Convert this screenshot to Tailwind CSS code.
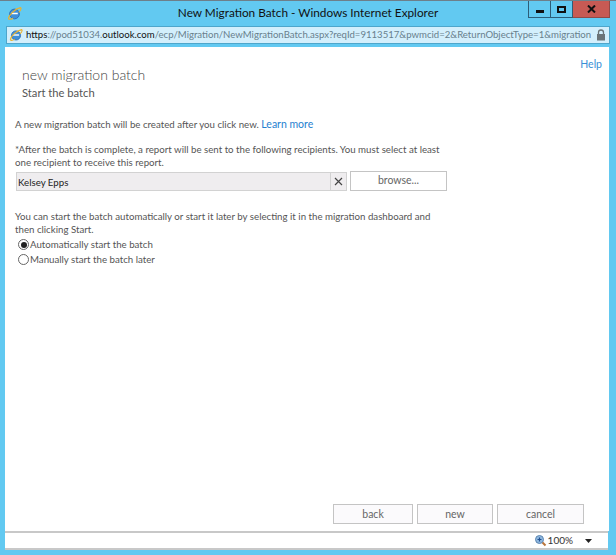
<!DOCTYPE html>
<html><head><meta charset="utf-8"><script src="https://cdn.jsdelivr.net/npm/@tailwindcss/browser@4"></script></head>
<body class="m-0">
<div class="w-[616px] h-[555px] overflow-hidden bg-[#62c9f1] flex flex-col font-['Lato',sans-serif] text-[#555] border-t border-[#6d7f8a]">
  <div class="h-[25px] shrink-0 grid grid-cols-[1fr_auto_1fr] items-start">
    <div class="pl-[7px] pt-[5px]">
      <svg width="15" height="15" viewBox="0 0 16 16"><circle cx="8" cy="8.5" r="5.2" fill="#3f8fd8" stroke="#2b6fb8" stroke-width="1"/><path d="M4.5 8h7" stroke="#fff" stroke-width="1.6"/><path d="M1.5 13.5C2 10 8 3 14.5 1.8c1.5 1.5-1 4-2 5M1.5 13.5c1 1.2 3 .6 5-.5" fill="none" stroke="#e8b230" stroke-width="1.3"/></svg>
    </div>
    <div class="text-[11.8px] leading-[18px] pt-[3px] text-[#111] whitespace-nowrap">New Migration Batch - Windows Internet Explorer</div>
    <div class="flex justify-end pr-[6px]">
      <div class="w-[23px] h-[17px] border border-t-0 border-[#2d5d78] flex items-center justify-center"><div class="w-[8px] h-[3px] bg-[#111] mt-[4px]"></div></div>
      <div class="w-[22px] h-[17px] border border-t-0 border-l-0 border-[#2d5d78] flex items-center justify-center"><div class="w-[9px] h-[7px] border-2 border-[#111]"></div></div>
      <div class="w-[37px] h-[17px] bg-[#c75a54] border-b border-r border-[#8f4a48] flex items-center justify-center">
        <svg width="9" height="8" viewBox="0 0 9 8"><path d="M1 .5l7 7M8 .5l-7 7" stroke="#111" stroke-width="2"/></svg>
      </div>
    </div>
  </div>
  <div class="mx-[6px] h-[18px] shrink-0 bg-[#d3effc] border border-[#4ea6cb] flex items-center pl-[2px] pr-[3px] text-[9.6px] text-[#68808c] whitespace-nowrap">
    <svg class="shrink-0" width="14" height="14" viewBox="0 0 16 16"><circle cx="8" cy="8.5" r="5.2" fill="#3f8fd8" stroke="#2b6fb8" stroke-width="1"/><path d="M4.5 8h7" stroke="#fff" stroke-width="1.6"/><path d="M1.5 13.5C2 10 8 3 14.5 1.8c1.5 1.5-1 4-2 5M1.5 13.5c1 1.2 3 .6 5-.5" fill="none" stroke="#e8b230" stroke-width="1.3"/></svg>
    <div class="ml-[3px] w-[565px] overflow-hidden"><span class="text-[#111]">https</span>://pod51034.<span class="text-[#111]">outlook.com</span>/ecp/Migration/NewMigrationBatch.aspx?reqId=9113517&amp;pwmcid=2&amp;ReturnObjectType=1&amp;migration</div>
    <svg class="shrink-0 ml-auto" width="10" height="12" viewBox="0 0 10 12"><path d="M2.5 5V3.5a2.5 2.5 0 0 1 5 0V5" fill="none" stroke="#6b7478" stroke-width="1.3"/><rect x="1" y="5" width="8" height="6.5" fill="#6b7478"/></svg>
  </div>
  <div class="ml-[5px] mr-[7px] mt-[3px] flex-1 min-h-0 bg-white flex flex-col pb-[7px]">
    <div class="flex justify-between pt-[10px] pr-[7px]">
      <div class="pl-[17px] pt-[8px]">
        <div class="text-[14px] leading-[20px] font-light text-[#444]">new migration batch</div>
        <div class="text-[11.2px] leading-[16px] text-[#555]">Start the batch</div>
      </div>
      <div class="text-[10.5px] leading-[14px] text-[#3a8fd6]">Help</div>
    </div>
    <div class="pl-[10px] w-[442px] text-[9.7px] leading-[13px] text-[#555]">
      <div class="mt-[17px]">A new migration batch will be created after you click new. <span class="text-[#1f7fd0] text-[10.5px]">Learn more</span></div>
      <div class="mt-[12px]">*After the batch is complete, a report will be sent to the following recipients. You must select at least one recipient to receive this report.</div>
      <div class="mt-[2px] flex items-center">
        <div class="ml-[1px] w-[331px] h-[19px] bg-[#efedef] border border-[#d2d2d2] flex">
          <div class="flex-1 pl-[1px] leading-[19px] text-[#222]">Kelsey Epps</div>
          <div class="w-[16px] border-l border-[#d2d2d2] flex items-center justify-center">
            <svg width="9" height="9" viewBox="0 0 9 9"><path d="M1 1l7 7M8 1l-7 7" stroke="#444" stroke-width="1.2"/></svg>
          </div>
        </div>
        <div class="ml-[3px] w-[97px] h-[20px] bg-white border border-[#c4c4c4] text-center text-[10.5px] leading-[17px] text-[#666]">browse...</div>
      </div>
      <div class="mt-[19px]">You can start the batch automatically or start it later by selecting it in the migration dashboard and then clicking Start.</div>
      <div class="mt-[1px] flex items-center h-[15px]">
        <div class="ml-[3px] w-[11px] h-[11px] rounded-full border border-[#666] flex items-center justify-center"><div class="w-[6px] h-[6px] rounded-full bg-[#222]"></div></div>
        <span class="ml-[1px]">Automatically start the batch</span>
      </div>
      <div class="flex items-center h-[15px]">
        <div class="ml-[3px] w-[11px] h-[11px] rounded-full border border-[#666]"></div>
        <span class="ml-[1px]">Manually start the batch later</span>
      </div>
    </div>
    <div class="mt-auto flex justify-end gap-[4px] pr-[25px] text-[10.5px] text-[#666] leading-[18px] text-center">
      <div class="w-[80px] h-[20px] bg-[#fbfafc] border border-[#c4c4c4]">back</div>
      <div class="w-[76px] h-[20px] bg-[#fbfafc] border border-[#c4c4c4]">new</div>
      <div class="w-[87px] h-[20px] bg-[#fbfafc] border border-[#c4c4c4]">cancel</div>
    </div>
  </div>
  <div class="ml-[5px] mr-[8px] mb-[5px] h-[19px] shrink-0 bg-white border-t-2 border-b-2 border-[#c8c8c8] flex items-center justify-end text-[10px] text-[#333] pr-[16px]">
    <svg width="13" height="13" viewBox="0 0 13 13"><circle cx="5.5" cy="5.5" r="4" fill="#8fb8e0" stroke="#5c86b0"/><path d="M3.5 5.5h4M5.5 3.5v4" stroke="#1f4f90" stroke-width="1.2"/><path d="M8.5 8.5l3 3" stroke="#b9753a" stroke-width="2"/></svg>
    <span class="ml-[1px]">100%</span>
    <svg class="ml-[12px]" width="7" height="4" viewBox="0 0 7 4"><path d="M0 0h7L3.5 4z" fill="#222"/></svg>
  </div>
</div>
</body></html>
